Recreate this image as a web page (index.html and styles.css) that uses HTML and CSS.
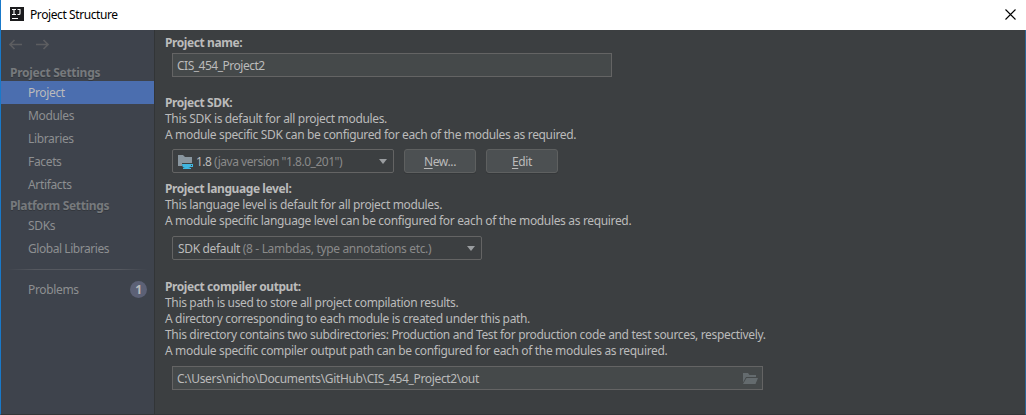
FILE: index.html
```html
<!DOCTYPE html>
<html lang="en">
<head>
<meta charset="utf-8">
<title>Project Structure</title>
<link rel="stylesheet" href="styles.css">
</head>
<body>
<div class="window">
  <header class="titlebar">
    <svg class="app-icon" width="14" height="14" viewBox="0 0 14 14"><rect width="14" height="14" fill="#1b1b1d"/><path d="M2 2.500h4M4 2.500v5M2 7.500h4M7.500 2.500h3M10 2.500v4q0 1-1 1H7.500M2 11.500h6" fill="none" stroke="#fff" stroke-width="1.1"/></svg>
    <h1 class="title">Project Structure</h1>
    <svg class="close" width="11" height="11" viewBox="0 0 11 11"><path d="M.5.5l10 10M10.5.5l-10 10" stroke="#000" stroke-width="1.1"/></svg>
  </header>
  <div class="main">
    <nav class="sidebar">
      <div class="history">
        <svg width="14" height="11" viewBox="0 0 14 11"><path d="M13 5.500H1M5.500 1L1 5.500 5.500 10" fill="none" stroke="#5c5d60" stroke-width="1.7"/></svg>
        <svg width="14" height="11" viewBox="0 0 14 11"><path d="M0 5.500h12M7.500 1L12 5.500 7.500 10" fill="none" stroke="#5c5d60" stroke-width="1.7"/></svg>
      </div>
      <h2 class="group group-project">Project Settings</h2>
      <a class="item selected"><span>Project</span></a>
      <a class="item"><span>Modules</span></a>
      <a class="item"><span>Libraries</span></a>
      <a class="item"><span>Facets</span></a>
      <a class="item"><span>Artifacts</span></a>
      <h2 class="group group-platform">Platform Settings</h2>
      <a class="item"><span>SDKs</span></a>
      <a class="item"><span class="tight">Global Libraries</span></a>
      <div class="divider"></div>
      <a class="item"><span>Problems</span><b class="badge">1</b></a>
    </nav>
    <main class="content">
      <section class="name">
        <h3>Project name:</h3>
        <div class="field field-name"><span class="tight">CIS_454_Project2</span></div>
      </section>
      <section class="sdk">
        <h3>Project SDK:</h3>
        <p>This SDK is default for all project modules.</p>
        <p>A module specific SDK can be configured for each of the modules as required.</p>
        <div class="controls">
          <div class="combo combo-sdk">
            <svg class="sdk-icon" width="16" height="14" viewBox="0 0 16 14"><path d="M0 0h5l2 2h7v6H4v3H0z" fill="#89969f"/><path d="M4 9h11v3h-2.500q-1 1-2.500 1H7.500Q4 13 4 9z" fill="#40b6e0"/><path d="M13 10h1v1h-1z" fill="#3c3f41"/><path d="M5 13.500h8" stroke="#40b6e0"/></svg>
            <span class="value tight">1.8 <span class="dim">(java version "1.8.0_201")</span></span>
            <i class="caret"></i>
          </div>
          <button class="btn"><span><u>N</u>ew...</span></button>
          <button class="btn"><span><u>E</u>dit</span></button>
        </div>
      </section>
      <section class="level">
        <h3>Project language level:</h3>
        <p>This language level is default for all project modules.</p>
        <p>A module specific language level can be configured for each of the modules as required.</p>
        <div class="combo combo-level"><span class="value">SDK default <span class="dim">(8 - Lambdas, type annotations etc.)</span></span><i class="caret"></i></div>
      </section>
      <section class="output">
        <h3>Project compiler output:</h3>
        <p>This path is used to store all project compilation results.</p>
        <p>A directory corresponding to each module is created under this path.</p>
        <p>This directory contains two subdirectories: Production and Test for production code and test sources, respectively.</p>
        <p>A module specific compiler output path can be configured for each of the modules as required.</p>
        <div class="field field-output"><span>C:\Users\nicho\Documents\GitHub\CIS_454_Project2\out</span>
          <svg width="15" height="11" viewBox="0 0 15 11"><path d="M0 0h5l1.500 2H13v2H3L0 9.500z" fill="#646b6e"/><path d="M3.500 5H15l-2.500 6H0z" fill="#646b6e"/></svg>
        </div>
      </section>
    </main>
  </div>
</div>
</body>
</html>
```
FILE: styles.css
```css
* { box-sizing: border-box; }
body {
  margin: 0;
  font: 12px/16px "Noto Sans", "Open Sans", sans-serif;
  letter-spacing: -.34px;
  color: #bbb;
  background: #3c3f41;
}
h1, h2, h3, p { margin: 0; font-size: 12px; white-space: nowrap; }
h3 { letter-spacing: -.41px; }
svg { display: block; flex: none; }
.window { width: 1026px; height: 415px; display: flex; flex-direction: column; overflow: hidden; }
.titlebar { height: 30px; flex: none; display: flex; align-items: center; background: #fff; padding: 0 10px 2px 9px; border-left: 1px solid #1979c9; }
.title { flex: 1; margin-left: 6px; padding-top: 2px; font-weight: 400; letter-spacing: -.41px; color: #000; }
.main { flex: 1; display: flex; border: solid; border-width: 0 1px 1px; border-color: #1979c9 #2b6592 #333638 #1979c9; }
.sidebar { width: 154px; flex: none; background: #3e434c; border-right: 1px solid #323537; color: #8d8f91; }
.history { display: flex; gap: 13px; padding: 9px 0 0 8px; height: 35px; }
.group { padding-left: 9px; color: #777a7d; text-shadow: 0 1px #33373d; }
.group-project { height: 16px; letter-spacing: -.27px; }
.group-platform { height: 18px; padding-top: 2px; }
.item { display: flex; align-items: center; height: 23px; padding: 0 7px 0 27px; }
.item span { padding-top: 1px; }
.item .tight { letter-spacing: -.44px; }
.tight { letter-spacing: -.49px; }
.selected { background: #4b6eaf; color: #bbb; }
.divider { height: 1px; margin: 9px 6px 8px; background: linear-gradient(90deg, transparent, #55585f 20%, #55585f 80%, transparent); }
.badge { width: 17px; height: 17px; margin-left: auto; border-radius: 50%; background: #5c6176; color: #bbb; text-align: center; line-height: 17px; }
.content { padding: 5px 0 0 10px; }
.field, .combo { margin-left: 7px; height: 24px; border: 1px solid #646464; display: flex; align-items: center; justify-content: space-between; white-space: nowrap; }
.field { background: #45494a; padding: 0 4px; }
.field span, .value, .btn > span { padding-top: 2px; }
.combo { border-radius: 2px; padding: 0 6px 0 5px; }
.field-name { width: 440px; margin-top: 2px; }
.sdk { margin-top: 18px; }
.controls { display: flex; margin-top: 6px; }
.combo-sdk { width: 222px; margin-right: 10px; }
.sdk-icon { margin: 2px 2px 0 0; }
.value { flex: 1; }
.dim { color: #8a8a8a; }
.caret { border: solid transparent; border-width: 5px 4.500px 0; border-top-color: #9a9da0; }
.btn { display: flex; align-items: center; justify-content: center; width: 72px; height: 24px; margin-right: 10px; padding: 0; border: 1px solid #5e6060; border-radius: 3px; background: #4c5052; box-shadow: 0 1px #35383a; color: #bbb; font: inherit; letter-spacing: inherit; }
.btn u { text-underline-offset: 2px; }
.level { margin-top: 8px; }
.combo-level { width: 310px; margin-top: 7px; }
.output { margin-top: 19px; }
.field-output { width: 591px; margin-top: 7px; }
```
